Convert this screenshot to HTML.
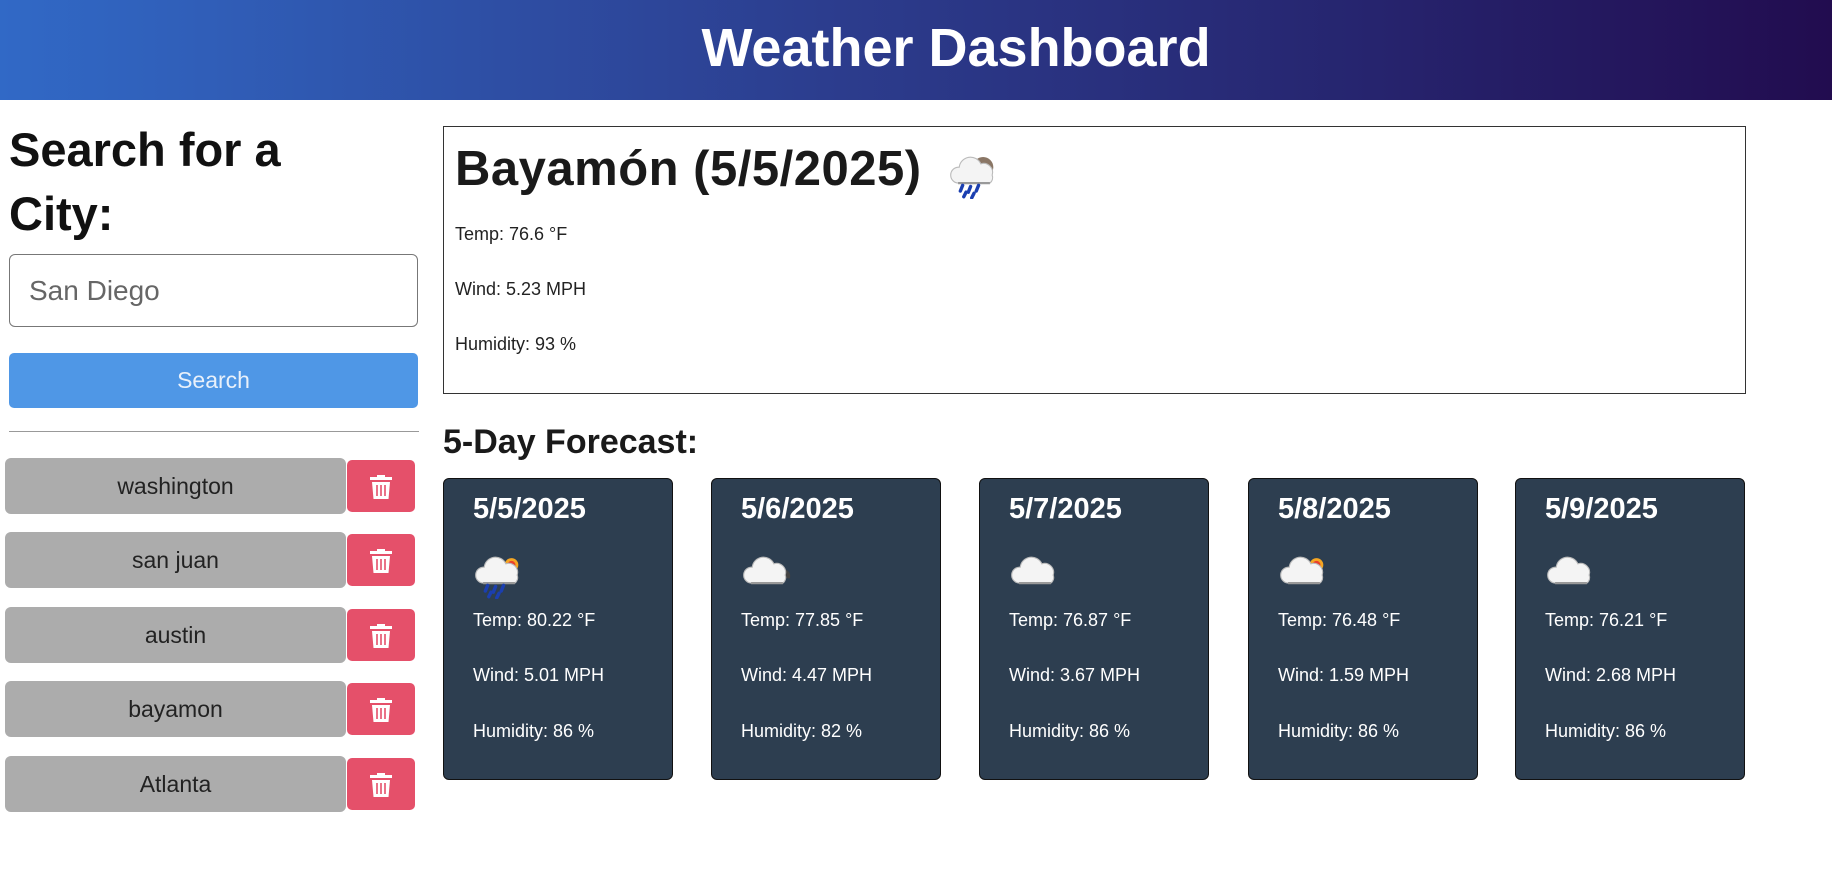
<!DOCTYPE html>
<html><head><meta charset="utf-8"><style>
*{box-sizing:border-box;margin:0;padding:0}
body{width:1832px;height:873px;overflow:hidden;background:#fff;font-family:"Liberation Sans",sans-serif;color:#212529;position:relative}
.hdr{position:absolute;left:0;top:0;width:1832px;height:100px;background:linear-gradient(90deg,#3169c6,#2c3d8e 45%,#26246e 75%,#220c4f);color:#fff;font-weight:bold;font-size:54px;text-align:center;line-height:96px;padding-left:80px}
.abs{position:absolute}
h2{position:absolute;left:9px;top:118px;font-size:47px;line-height:64px;font-weight:bold;color:#111}
.inp{left:9px;top:254px;width:409px;height:73px;border:1px solid #777;border-radius:6px;font-size:28px;color:#666;padding:20px 0 0 19px}
.btn{left:9px;top:353px;width:409px;height:55px;background:#4f97e6;border-radius:5px;color:#e8f0fa;font-size:23px;text-align:center;line-height:55px}
.hr{left:9px;top:431px;width:410px;height:1px;background:#999}
.city{left:5px;width:341px;height:56px;background:#acacac;border-radius:6px;text-align:center;line-height:56px;font-size:23px;color:#222}
.del{left:347px;width:68px;height:52px;background:#e5506a;border-radius:5px}
.del svg{position:absolute;left:23px;top:15px}
.cur{left:443px;top:126px;width:1303px;height:268px;border:1px solid #333}
.cur .t{position:absolute;left:11px;top:14px;font-size:49px;font-weight:bold;color:#1a1a1a;letter-spacing:0.5px}
.cur p{position:absolute;left:11px;font-size:18px;color:#222}
.fh{left:443px;top:423px;font-size:34px;font-weight:bold;color:#1a1a1a}
.card{top:478px;width:230px;height:302px;background:#2d3e50;border:1px solid #111;border-radius:6px;color:#fff}
.card .d{position:absolute;left:29px;top:14px;font-size:29px;font-weight:bold}
.card svg.i{position:absolute;left:30px;top:70px}
.card p{position:absolute;left:29px;font-size:18px}
</style></head><body>
<svg width="0" height="0" style="position:absolute">
<defs>
<g id="cl"><path d="M8 30a7 7 0 0 1 1-14a10 10 0 0 1 19-3a8 8 0 0 1 10 10a6 6 0 0 1-2 7z" fill="#f4f4f4" stroke="#bbb" stroke-width="1"/><path d="M8 30h28" stroke="#999" stroke-width="2"/></g>
<g id="rn"><path d="M12 32l-2 5M19 33l-2 5M26 32l-2 5M15 38l-2 4M22 39l-2 4" stroke="#1b3fb0" stroke-width="3" stroke-linecap="round"/></g>
<g id="sn"><circle cx="33" cy="14" r="6" fill="#f5a623"/><circle cx="33" cy="14" r="3.5" fill="#e8412c"/></g>
</defs></svg>
<div class="hdr">Weather Dashboard</div>
<h2>Search for a<br>City:</h2>
<div class="abs inp">San Diego</div>
<div class="abs btn">Search</div>
<div class="abs hr"></div>

<div class="abs city" style="top:458px">washington</div><div class="abs del" style="top:460px"><svg width="22" height="24" viewBox="0 0 22 24"><rect x="0" y="2" width="22" height="3" fill="#fff"/><rect x="7" y="0" width="8" height="3" fill="#fff"/><path d="M2 7h18l-1.5 17h-15z" fill="#fff"/><path d="M7 10v11M11 10v11M15 10v11" stroke="#e5506a" stroke-width="1.6"/></svg></div>
<div class="abs city" style="top:532px">san juan</div><div class="abs del" style="top:534px"><svg width="22" height="24" viewBox="0 0 22 24"><rect x="0" y="2" width="22" height="3" fill="#fff"/><rect x="7" y="0" width="8" height="3" fill="#fff"/><path d="M2 7h18l-1.5 17h-15z" fill="#fff"/><path d="M7 10v11M11 10v11M15 10v11" stroke="#e5506a" stroke-width="1.6"/></svg></div>
<div class="abs city" style="top:607px">austin</div><div class="abs del" style="top:609px"><svg width="22" height="24" viewBox="0 0 22 24"><rect x="0" y="2" width="22" height="3" fill="#fff"/><rect x="7" y="0" width="8" height="3" fill="#fff"/><path d="M2 7h18l-1.5 17h-15z" fill="#fff"/><path d="M7 10v11M11 10v11M15 10v11" stroke="#e5506a" stroke-width="1.6"/></svg></div>
<div class="abs city" style="top:681px">bayamon</div><div class="abs del" style="top:683px"><svg width="22" height="24" viewBox="0 0 22 24"><rect x="0" y="2" width="22" height="3" fill="#fff"/><rect x="7" y="0" width="8" height="3" fill="#fff"/><path d="M2 7h18l-1.5 17h-15z" fill="#fff"/><path d="M7 10v11M11 10v11M15 10v11" stroke="#e5506a" stroke-width="1.6"/></svg></div>
<div class="abs city" style="top:756px">Atlanta</div><div class="abs del" style="top:758px"><svg width="22" height="24" viewBox="0 0 22 24"><rect x="0" y="2" width="22" height="3" fill="#fff"/><rect x="7" y="0" width="8" height="3" fill="#fff"/><path d="M2 7h18l-1.5 17h-15z" fill="#fff"/><path d="M7 10v11M11 10v11M15 10v11" stroke="#e5506a" stroke-width="1.6"/></svg></div>

<div class="abs cur">
<div class="t">Bayamón (5/5/2025)</div>
<svg class="abs" style="left:505px;top:22px" width="50" height="50" viewBox="0 0 44 44"><circle cx="30" cy="16" r="9" fill="#8a7665"/><use href="#cl"/><use href="#rn"/></svg>
<p style="top:97px">Temp: 76.6 °F</p>
<p style="top:152px">Wind: 5.23 MPH</p>
<p style="top:207px">Humidity: 93 %</p>
</div>
<div class="abs fh">5-Day Forecast:</div>

<div class="abs card" style="left:443px"><div class="d">5/5/2025</div><svg class="i" width="50" height="50" viewBox="0 0 44 44"><use href="#sn"/><use href="#cl"/><use href="#rn"/></svg><p style="top:131px">Temp: 80.22 °F</p><p style="top:186px">Wind: 5.01 MPH</p><p style="top:242px">Humidity: 86 %</p></div>
<div class="abs card" style="left:711px"><div class="d">5/6/2025</div><svg class="i" width="50" height="50" viewBox="0 0 44 44"><path d="M24 24a8 8 0 0 1 14-6a6 6 0 0 1 4 8z" fill="#444"/><use href="#cl"/></svg><p style="top:131px">Temp: 77.85 °F</p><p style="top:186px">Wind: 4.47 MPH</p><p style="top:242px">Humidity: 82 %</p></div>
<div class="abs card" style="left:979px"><div class="d">5/7/2025</div><svg class="i" width="50" height="50" viewBox="0 0 44 44"><use href="#cl"/></svg><p style="top:131px">Temp: 76.87 °F</p><p style="top:186px">Wind: 3.67 MPH</p><p style="top:242px">Humidity: 86 %</p></div>
<div class="abs card" style="left:1248px"><div class="d">5/8/2025</div><svg class="i" width="50" height="50" viewBox="0 0 44 44"><use href="#sn"/><use href="#cl"/></svg><p style="top:131px">Temp: 76.48 °F</p><p style="top:186px">Wind: 1.59 MPH</p><p style="top:242px">Humidity: 86 %</p></div>
<div class="abs card" style="left:1515px"><div class="d">5/9/2025</div><svg class="i" width="50" height="50" viewBox="0 0 44 44"><use href="#cl"/></svg><p style="top:131px">Temp: 76.21 °F</p><p style="top:186px">Wind: 2.68 MPH</p><p style="top:242px">Humidity: 86 %</p></div>
</body></html>
